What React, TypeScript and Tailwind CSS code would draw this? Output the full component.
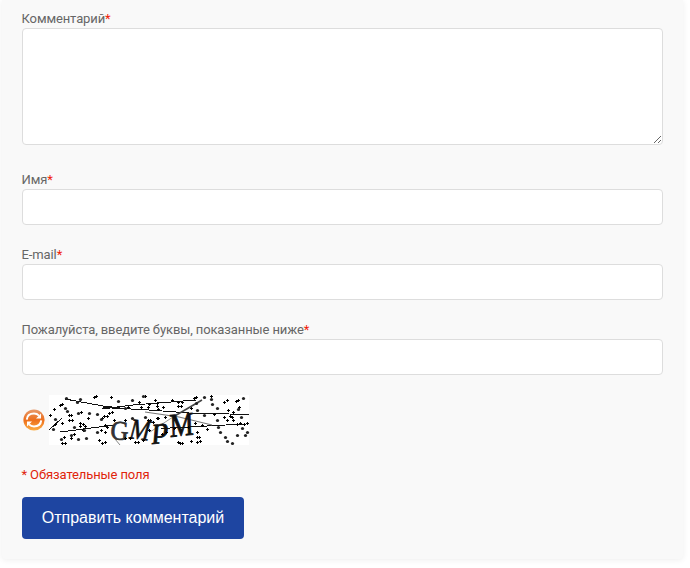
import React from 'react';

const CROSSES = [
  [45,2],[47,1],[5,14],[11,10],[13,9],[20,20],[22,20],[20,25],[23,25],[32,17],[39,23],[55,21],[1,20],[13,28],[6,29],
  [31,28],[34,29],[31,31],[36,31],[34,35],[52,35],[56,37],[25,39],[22,43],[15,42],[13,48],[16,48],[50,45],[53,48],
  [62,2],[90,7],[96,1],[106,5],[108,11],[99,12],[79,12],[63,17],[60,18],[58,21],[53,23],[65,25],[76,25],[99,25],
  [104,27],[108,23],[56,30],[58,32],[100,35],[76,43],[81,43],[89,47],[94,45],[56,47],[83,5],[108,8],[100,9],[92,12],
  [109,14],[114,12],[123,5],[129,7],[132,11],[133,7],[129,11],[142,13],[145,3],[147,2],[162,1],[175,7],[178,5],[187,6],
  [189,5],[190,12],[179,15],[184,17],[165,19],[181,21],[178,25],[175,22],[183,22],[184,25],[158,34],[198,28],[191,28],
  [188,29],[195,29],[148,37],[148,42],[150,42],[148,47],[151,46],[142,46],[129,47],[131,48],[133,48],[86,47],[153,30],
  [146,28],[109,23],[101,25],[116,22],[125,33],[139,32],[113,39],[117,37],
];

const DOTS = [
  [17,3],[28,7],[31,4],[16,13],[18,16],[29,18],[40,18],[48,19],[52,24],[6,24],[25,32],[48,37],[22,40],[12,44],[29,44],
  [37,43],[69,6],[83,5],[76,13],[83,23],[96,22],[94,1],[147,8],[155,2],[162,4],[163,9],[168,13],[194,3],[189,14],
  [148,15],[155,20],[192,22],[168,25],[169,32],[171,37],[176,42],[178,46],[183,48],[188,40],[196,40],[198,37],[193,33],
  [35,35],[4,34],
];

function Captcha() {
  return (
    <svg width="200" height="50" viewBox="0 0 200 50" className="overflow-visible bg-white">
      <g stroke="#111" fill="none" strokeWidth="1" shapeRendering="crispEdges">
        <path d="M16 4 L54 11 L80 14" />
        <path d="M54 12.5 L100 15 L140 18 L200 19.5" />
        <path d="M53 14 L84 10 L147 5" />
        <path d="M11 37 L66 30" />
        <path d="M0 35 L13 23" />
        <path d="M112 33.5 L195 29" />
      </g>
      <g fill="none" stroke="#444">
        <path d="M153 5 L124 22" strokeWidth="1.5" />
        <path d="M124 22 L101 37" strokeWidth="1" stroke="#999" />
        <path d="M96 17 L130 22 L163 30" strokeWidth="1.1" stroke="#777" />
        <path d="M66 44 L71 50" stroke="#888" />
      </g>
      <g fill="#111" stroke="#111" fontFamily="Liberation Serif, serif">
        <text transform="translate(61 44) rotate(4)" fontSize="27" fill="#333" stroke="#333" strokeWidth=".8" textLength="18" lengthAdjust="spacingAndGlyphs">G</text>
        <text transform="translate(79 43) rotate(7) skewX(-8)" fontSize="29" strokeWidth=".7" textLength="20" lengthAdjust="spacingAndGlyphs">M</text>
        <text transform="translate(103 43) rotate(-5) skewX(-10)" fontSize="28" strokeWidth=".8" textLength="16" lengthAdjust="spacingAndGlyphs">p</text>
        <text transform="translate(121 42) rotate(-6) skewX(-4)" fontSize="33" strokeWidth=".9" textLength="24" lengthAdjust="spacingAndGlyphs">M</text>
      </g>
      <g fill="#000" shapeRendering="crispEdges">
        {CROSSES.map(([x, y], i) => (
          <path key={i} d={`M${x - 1} ${y}h3v1h-3zM${x} ${y - 1}h1v3h-1z`} />
        ))}
      </g>
      <g fill="#222">
        {DOTS.map(([x, y], i) => (
          <circle key={i} cx={x + 0.5} cy={y + 0.5} r="1.6" />
        ))}
      </g>
    </svg>
  );
}

function RefreshIcon() {
  return (
    <svg width="22" height="22" viewBox="0 0 22 22">
      <defs>
        <linearGradient id="disc" x1="0" y1="0" x2="0" y2="1">
          <stop offset="0" stopColor="#e79a6c" />
          <stop offset=".5" stopColor="#ed6f1c" />
          <stop offset="1" stopColor="#fcae45" />
        </linearGradient>
      </defs>
      <circle cx="11" cy="11" r="10.6" fill="url(#disc)" />
      <g fill="none" stroke="#fff" strokeWidth="2">
        <path d="M3.8 10.6 C4.2 6.4 7.4 4.6 11 4.6 C13.2 4.6 14.8 5.4 16 6.6" />
        <path d="M18.2 11.4 C17.8 15.6 14.6 17.4 11 17.4 C8.8 17.4 7.2 16.6 6 15.4" />
      </g>
      <path d="M18 4.6v4.8h-5zM4 17.4v-4.8h5z" fill="#fff" />
    </svg>
  );
}

function Label({ children }: { children: React.ReactNode }) {
  return (
    <label className="-ml-[0.5px] block h-[19px] text-[13px] leading-[19px] tracking-[-0.11px] text-[#666]">
      {children}
      <span className="text-[#f01c08]">*</span>
    </label>
  );
}

function Field({ label }: { label: string }) {
  return (
    <div className="mb-5">
      <Label>{label}</Label>
      <input className="block h-9 w-full rounded border border-[#ddd] bg-white px-3 outline-none" />
    </div>
  );
}

export default function App() {
  return (
    <div className="h-[568px] overflow-hidden bg-white pr-[7px] pl-[2px] font-['Roboto',sans-serif]">
      <form className="h-[559px] rounded-b bg-[#f9f9f9] pt-[9px] pr-5 pl-5 shadow-[0_1px_6px_rgba(0,0,0,0.07)]">
        <div className="mb-[25px]">
          <Label>Комментарий</Label>
          <textarea className="block h-[117px] w-full resize-y rounded border border-[#ddd] bg-white outline-none" />
        </div>
        <Field label="Имя" />
        <Field label="E-mail" />
        <Field label="Пожалуйста, введите буквы, показанные ниже" />
        <div className="flex h-[50px] items-center gap-[4px] pl-px">
          <RefreshIcon />
          <Captcha />
        </div>
        <p className="mt-5 -ml-[0.5px] text-[13px] leading-[19px] tracking-[-0.11px] text-[#e0240b]">* Обязательные поля</p>
        <button
          type="button"
          className="mt-[13px] block h-[42px] w-[222px] rounded bg-[#1e45a1] font-['Liberation_Sans',Arial,sans-serif] text-base whitespace-nowrap text-white"
        >
          Отправить комментарий
        </button>
      </form>
    </div>
  );
}
